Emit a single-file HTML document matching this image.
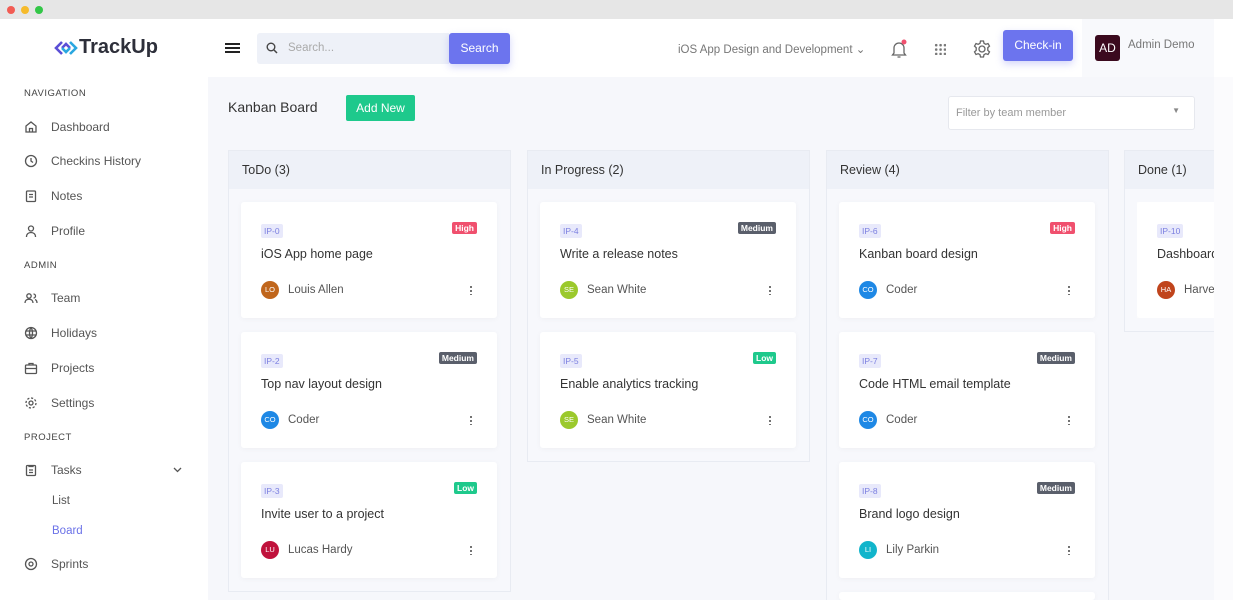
<!DOCTYPE html>
<html><head><meta charset="utf-8"><style>
*{box-sizing:border-box;margin:0;padding:0}
html{width:1233px;height:600px;overflow:hidden}
body{width:1233px;height:600px;overflow:hidden;font-family:"Liberation Sans",sans-serif;background:#f6f7fb;position:relative;color:#333}
.top{position:absolute;left:0;top:0;width:1233px;height:19px;background:#e6e6e6}
.dot{position:absolute;top:6px;width:8px;height:8px;border-radius:50%}
.side{position:absolute;left:0;top:19px;width:208px;height:581px;background:#fff}
.hdr{position:absolute;left:208px;top:19px;width:1025px;height:58px;background:#fff}
.sec{position:absolute;left:24px;font-size:9.5px;letter-spacing:.5px;color:#444}
.it{position:absolute;left:51px;font-size:12px;color:#555}
.ic{position:absolute;left:24px;width:14px;height:14px}
.col{position:absolute;top:150px;width:283px;border:1px solid #e8ebf2;background:#f7f8fc}
.ch{height:38px;background:#eef1f8;font-size:12.5px;color:#333;padding:12px 0 0 13px}
.card{position:absolute;width:256px;height:116px;background:#fff;border-radius:3px;box-shadow:0 1px 6px rgba(0,0,0,.04)}
.ip{position:absolute;left:20px;top:22px;font-size:8.5px;color:#7b7fe0;background:#e8e9fb;padding:2px 3px;border-radius:2px}
.pr{position:absolute;right:20px;top:20px;font-size:8.5px;color:#fff;font-weight:bold;padding:1px 3px;border-radius:2px}
.t{position:absolute;left:20px;top:45px;font-size:12.5px;color:#333}
.av{position:absolute;left:20px;top:79px;width:18px;height:18px;border-radius:50%;color:#fff;font-size:7.5px;text-align:center;line-height:18px}
.nm{position:absolute;left:47px;top:82px;font-size:11.5px;color:#555}
.km{position:absolute;right:25px;top:83px;width:2px;height:10px;background:radial-gradient(circle,#666 1px,transparent 1.2px) 0 0/2px 4px}
</style></head><body>
<div class="top"><div class="dot" style="left:7px;background:#f25c54"></div><div class="dot" style="left:21px;background:#f6bb2c"></div><div class="dot" style="left:35px;background:#33c748"></div></div>
<div class="side">
<svg style="position:absolute;left:53px;top:20px" width="26" height="18" viewBox="0 0 26 18"><path d="M9 3 L3 9 L9 15 M9 9 L13 5 L17 9" fill="none" stroke="#5b4fd6" stroke-width="2.6"/><path d="M17 3 L23 9 L17 15 M17 9 L13 13 L9 9" fill="none" stroke="#2aa7e0" stroke-width="2.6"/></svg>
<div style="position:absolute;left:79px;top:17px;font-size:20px;font-weight:bold;color:#2d2f3a">TrackUp</div>
<div class="sec" style="top:69px">NAVIGATION</div>
<svg class="ic" style="top:101px" viewBox="0 0 14 14" fill="none" stroke="#555" stroke-width="1.3"><path d="M2 6L7 2l5 4v6H2z M5.5 12V8.5h3V12"/></svg><div class="it" style="top:101px">Dashboard</div>
<svg class="ic" style="top:135px" viewBox="0 0 14 14" fill="none" stroke="#555" stroke-width="1.3"><circle cx="7" cy="7" r="5.5"/><path d="M7 4v3l2 1.5"/></svg><div class="it" style="top:135px">Checkins History</div>
<svg class="ic" style="top:170px" viewBox="0 0 14 14" fill="none" stroke="#555" stroke-width="1.3"><rect x="2.5" y="2" width="9" height="10.5" rx="1"/><path d="M5 5.5h4M5 8h4"/></svg><div class="it" style="top:170px">Notes</div>
<svg class="ic" style="top:205px" viewBox="0 0 14 14" fill="none" stroke="#555" stroke-width="1.3"><circle cx="7" cy="4.5" r="2.5"/><path d="M2.5 13c0-3 2-4.5 4.5-4.5s4.5 1.5 4.5 4.5"/></svg><div class="it" style="top:205px">Profile</div>
<div class="sec" style="top:241px">ADMIN</div>
<svg class="ic" style="top:272px" viewBox="0 0 14 14" fill="none" stroke="#555" stroke-width="1.3"><circle cx="5" cy="5" r="2.2"/><path d="M1 12c0-2.5 1.8-3.8 4-3.8s4 1.3 4 3.8M9.5 3a2 2 0 010 4M11 8.5c1.3.5 2 1.6 2 3.5"/></svg><div class="it" style="top:272px">Team</div>
<svg class="ic" style="top:307px" viewBox="0 0 14 14" fill="none" stroke="#555" stroke-width="1.3"><circle cx="7" cy="7" r="5.5"/><path d="M2 5h10M2 9h10M7 1.5c-2 3-2 8 0 11M7 1.5c2 3 2 8 0 11"/></svg><div class="it" style="top:307px">Holidays</div>
<svg class="ic" style="top:342px" viewBox="0 0 14 14" fill="none" stroke="#555" stroke-width="1.3"><rect x="1.5" y="4" width="11" height="8.5" rx="1"/><path d="M5 4V2.5h4V4M1.5 7.5h11"/></svg><div class="it" style="top:342px">Projects</div>
<svg class="ic" style="top:377px" viewBox="0 0 14 14" fill="none" stroke="#555" stroke-width="1.3"><circle cx="7" cy="7" r="2"/><circle cx="7" cy="7" r="5" stroke-dasharray="2.2 1.7"/></svg><div class="it" style="top:377px">Settings</div>
<div class="sec" style="top:413px">PROJECT</div>
<svg class="ic" style="top:444px" viewBox="0 0 14 14" fill="none" stroke="#555" stroke-width="1.3"><rect x="2.5" y="2.5" width="9" height="10" rx="1"/><path d="M5 2v1.5h4V2M5 7h4M5 9.5h4"/></svg><div class="it" style="top:444px">Tasks</div>
<svg style="position:absolute;left:173px;top:448px" width="9" height="6" viewBox="0 0 9 6"><path d="M1 1l3.5 3.5L8 1" fill="none" stroke="#555" stroke-width="1.3"/></svg>
<div class="it" style="top:476px;left:52px;font-size:11.5px">List</div>
<div class="it" style="top:506px;left:52px;font-size:11.5px;color:#6b72e8">Board</div>
<svg class="ic" style="top:538px" viewBox="0 0 14 14" fill="none" stroke="#555" stroke-width="1.3"><circle cx="7" cy="7" r="5.5"/><circle cx="7" cy="7" r="2"/></svg><div class="it" style="top:538px">Sprints</div>
</div>
<div class="hdr">
<div style="position:absolute;left:17px;top:24px;width:15px;height:2px;background:#222;box-shadow:0 4px 0 #222,0 8px 0 #222"></div>
<div style="position:absolute;left:49px;top:14px;width:192px;height:31px;background:#eef1f8;border-radius:3px 0 0 3px"></div>
<svg style="position:absolute;left:58px;top:23px" width="12" height="12" viewBox="0 0 12 12"><circle cx="5" cy="5" r="3.8" fill="none" stroke="#444" stroke-width="1.4"/><path d="M8 8l3 3" stroke="#444" stroke-width="1.5"/></svg>
<div style="position:absolute;left:80px;top:23px;font-size:11.5px;color:#aaa">Search...</div>
<div style="position:absolute;left:241px;top:14px;width:61px;height:31px;background:#6c74ee;border-radius:3px;color:#fff;font-size:12px;text-align:center;line-height:30px;box-shadow:0 3px 8px rgba(108,116,238,.3)">Search</div>
<div style="position:absolute;left:470px;top:23px;font-size:11.5px;color:#777">iOS App Design and Development ⌄</div>
<svg style="position:absolute;left:682px;top:20px" width="18" height="20" viewBox="0 0 18 20" fill="none" stroke="#666" stroke-width="1.3"><path d="M4 14V9a5 5 0 0110 0v5l1.5 2h-13z M7.5 18h3"/><circle cx="14" cy="3" r="2.5" fill="#f0506e" stroke="none"/></svg>
<div style="position:absolute;left:726px;top:24px;width:12px;height:12px;background:radial-gradient(circle,#777 1.2px,transparent 1.5px) 0 0/4.4px 4.4px"></div>
<svg style="position:absolute;left:764px;top:20px" width="20" height="20" viewBox="0 0 20 20" fill="none" stroke="#666" stroke-width="1.3"><circle cx="10" cy="10" r="3"/><path d="M8.5 2h3l.5 2.3 1.8 1 2.2-.8 1.5 2.6-1.7 1.6v2.6l1.7 1.6-1.5 2.6-2.2-.8-1.8 1-.5 2.3h-3l-.5-2.3-1.8-1-2.2.8-1.5-2.6 1.7-1.6V8.7L2.5 7.1 4 4.5l2.2.8 1.8-1z"/></svg>
<div style="position:absolute;left:795px;top:11px;width:70px;height:31px;background:#6c74ee;border-radius:3px;color:#fff;font-size:12px;text-align:center;line-height:30px;box-shadow:0 3px 8px rgba(108,116,238,.3)">Check-in</div>
<div style="position:absolute;left:874px;top:0;width:132px;height:58px;background:#f8f9fc"></div>
<div style="position:absolute;left:887px;top:16px;width:25px;height:26px;background:#3b0a1e;border-radius:3px;color:#fff;font-size:12px;text-align:center;line-height:26px">AD</div>
<div style="position:absolute;left:920px;top:20px;font-size:11.5px;color:#777">Admin Demo</div>
</div>
<div style="position:absolute;left:228px;top:99px;font-size:14px;color:#333">Kanban Board</div>
<div style="position:absolute;left:346px;top:95px;width:69px;height:26px;background:#1ec98c;border-radius:2px;color:#fff;font-size:12px;text-align:center;line-height:26px">Add New</div>
<div style="position:absolute;left:948px;top:96px;width:247px;height:34px;background:#fff;border:1px solid #e6e8ee;border-radius:3px;font-size:11px;color:#999;padding:10px 0 0 7px">Filter by team member<span style="position:absolute;right:14px;top:9px;font-size:8px;color:#888">▼</span></div>

<div class="col" style="left:228px;height:442px"><div class="ch">ToDo (3)</div></div>
<div class="col" style="left:527px;height:312px"><div class="ch">In Progress (2)</div></div>
<div class="col" style="left:826px;height:460px"><div class="ch">Review (4)</div></div>
<div class="col" style="left:1124px;height:182px;width:100px"><div class="ch">Done (1)</div></div>

<div class="card" style="left:241px;top:202px"><span class="ip">IP-0</span><span class="pr" style="background:#f0506e">High</span><div class="t">iOS App home page</div><div class="av" style="background:#c0661c">LO</div><div class="nm">Louis Allen</div><div class="km"></div></div>
<div class="card" style="left:241px;top:332px"><span class="ip">IP-2</span><span class="pr" style="background:#5a5f6b">Medium</span><div class="t">Top nav layout design</div><div class="av" style="background:#1e88e5">CO</div><div class="nm">Coder</div><div class="km"></div></div>
<div class="card" style="left:241px;top:462px"><span class="ip">IP-3</span><span class="pr" style="background:#1ec98c">Low</span><div class="t">Invite user to a project</div><div class="av" style="background:#c0123c">LU</div><div class="nm">Lucas Hardy</div><div class="km"></div></div>

<div class="card" style="left:540px;top:202px"><span class="ip">IP-4</span><span class="pr" style="background:#5a5f6b">Medium</span><div class="t">Write a release notes</div><div class="av" style="background:#9bc92c">SE</div><div class="nm">Sean White</div><div class="km"></div></div>
<div class="card" style="left:540px;top:332px"><span class="ip">IP-5</span><span class="pr" style="background:#1ec98c">Low</span><div class="t">Enable analytics tracking</div><div class="av" style="background:#9bc92c">SE</div><div class="nm">Sean White</div><div class="km"></div></div>

<div class="card" style="left:839px;top:202px"><span class="ip">IP-6</span><span class="pr" style="background:#f0506e">High</span><div class="t">Kanban board design</div><div class="av" style="background:#1e88e5">CO</div><div class="nm">Coder</div><div class="km"></div></div>
<div class="card" style="left:839px;top:332px"><span class="ip">IP-7</span><span class="pr" style="background:#5a5f6b">Medium</span><div class="t">Code HTML email template</div><div class="av" style="background:#1e88e5">CO</div><div class="nm">Coder</div><div class="km"></div></div>
<div class="card" style="left:839px;top:462px"><span class="ip">IP-8</span><span class="pr" style="background:#5a5f6b">Medium</span><div class="t">Brand logo design</div><div class="av" style="background:#12b5cb">LI</div><div class="nm">Lily Parkin</div><div class="km"></div></div>
<div class="card" style="left:839px;top:592px;height:8px"></div>

<div style="position:absolute;left:1137px;top:202px;width:77px;height:116px;background:#fff;overflow:hidden"><div class="card" style="left:0;top:0"><span class="ip">IP-10</span><div class="t">Dashboard</div><div class="av" style="background:#c0441c">HA</div><div class="nm">Harvey</div></div></div>
<div style="position:absolute;left:1214px;top:77px;width:19px;height:523px;background:#fbfbfd"></div>
</body></html>
